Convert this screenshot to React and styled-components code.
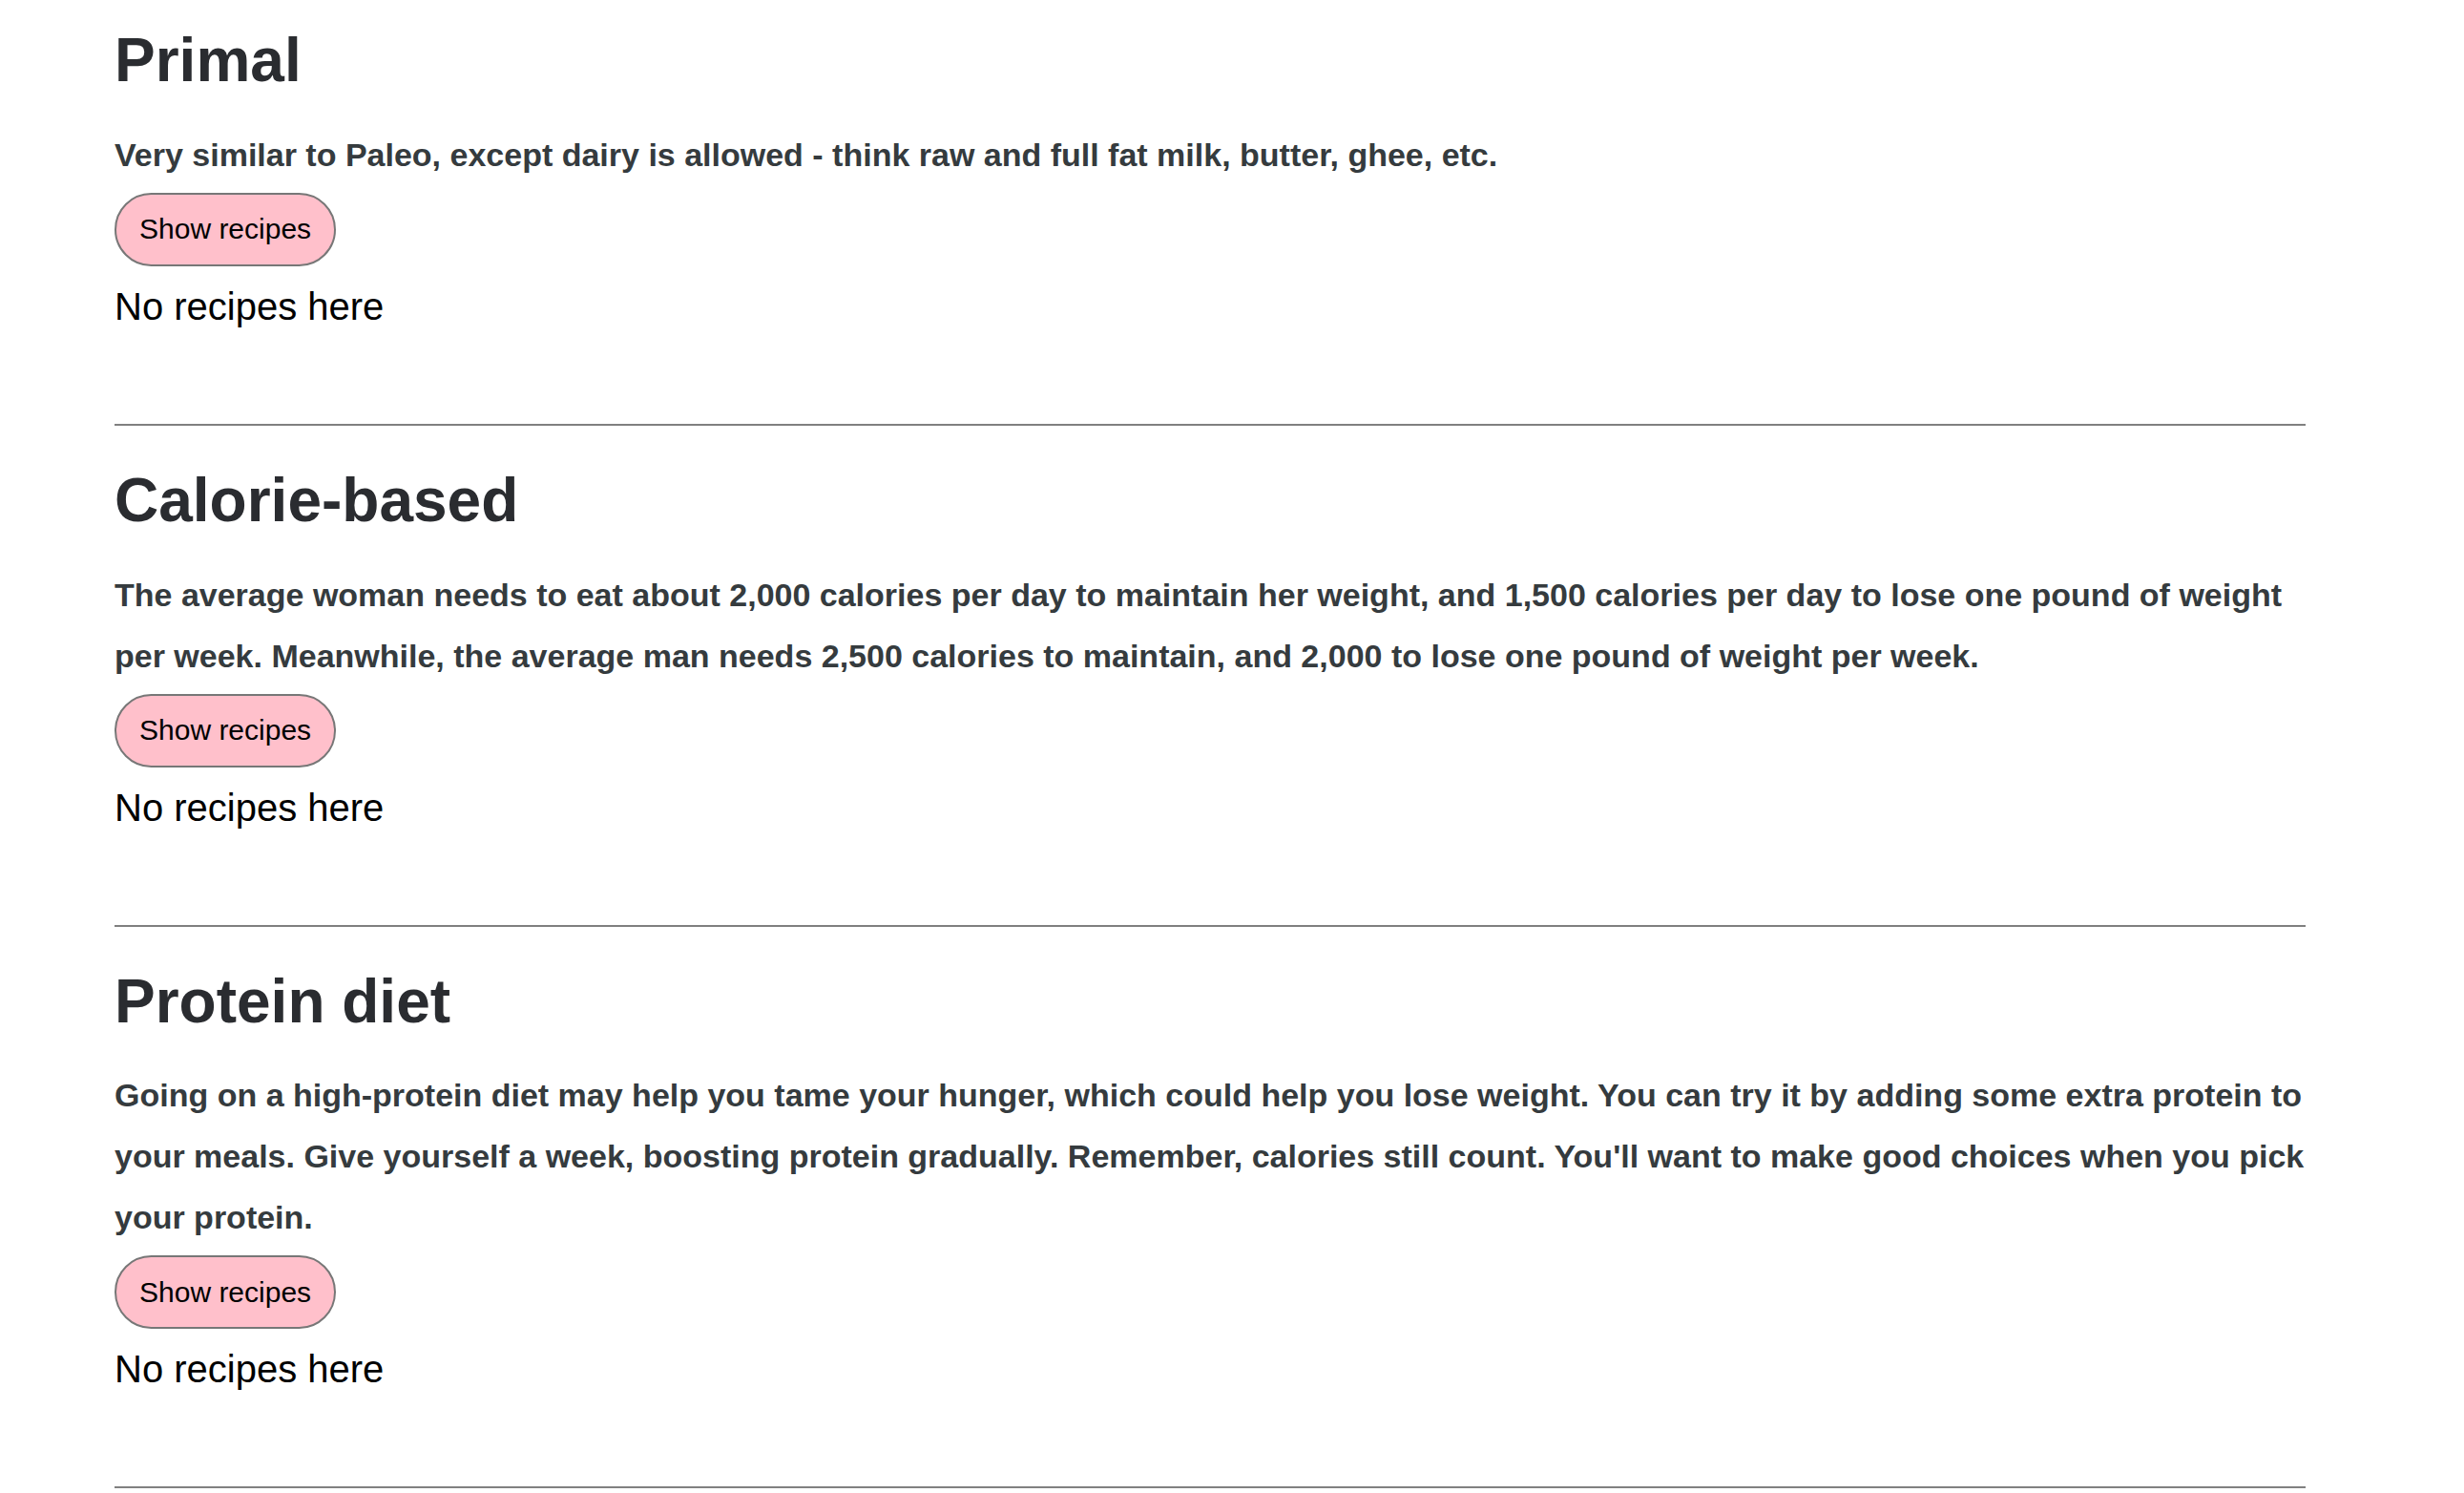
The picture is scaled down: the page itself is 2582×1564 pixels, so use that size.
import styled, { createGlobalStyle } from 'styled-components';

const GlobalStyle = createGlobalStyle`
  body {
    margin: 0;
    background: #fff;
    font-family: "Liberation Sans", Arial, sans-serif;
  }
`;

const Page = styled.div`
  padding: 25px 166px 0 120px;
`;

const Diet = styled.section`
  display: flex;
  flex-direction: column;
  align-items: flex-start;
`;

const Title = styled.h1`
  margin: 0 0 28px;
  font-size: 64px;
  line-height: 1.2;
  font-weight: 700;
  color: #2a2c30;
`;

const Description = styled.p`
  margin: 0 0 8px;
  font-size: 34px;
  line-height: 64px;
  font-weight: 700;
  color: #353b3e;
`;

const ShowButton = styled.button`
  height: 77px;
  padding: 0 24px;
  border: 2px solid #777;
  border-radius: 40px;
  background: #ffc0cb;
  color: #000;
  font-family: "Liberation Sans", Arial, sans-serif;
  font-size: 30px;
  cursor: pointer;
`;

const Empty = styled.div`
  margin-top: 20px;
  font-size: 40px;
  color: #000;
`;

const Divider = styled.hr`
  margin: 100px 0 40px;
  border: none;
  height: 2px;
  background: #808080;
`;

const diets = [
  {
    name: 'Primal',
    text: 'Very similar to Paleo, except dairy is allowed - think raw and full fat milk, butter, ghee, etc.',
  },
  {
    name: 'Calorie-based',
    text: 'The average woman needs to eat about 2,000 calories per day to maintain her weight, and 1,500 calories per day to lose one pound of weight per week. Meanwhile, the average man needs 2,500 calories to maintain, and 2,000 to lose one pound of weight per week.',
  },
  {
    name: 'Protein diet',
    text: "Going on a high-protein diet may help you tame your hunger, which could help you lose weight. You can try it by adding some extra protein to your meals. Give yourself a week, boosting protein gradually. Remember, calories still count. You'll want to make good choices when you pick your protein.",
  },
];

export default function App() {
  return (
    <>
      <GlobalStyle />
      <Page>
        {diets.map((diet) => (
          <div key={diet.name}>
            <Diet>
              <Title>{diet.name}</Title>
              <Description>{diet.text}</Description>
              <ShowButton>Show recipes</ShowButton>
              <Empty>No recipes here</Empty>
            </Diet>
            <Divider />
          </div>
        ))}
      </Page>
    </>
  );
}
